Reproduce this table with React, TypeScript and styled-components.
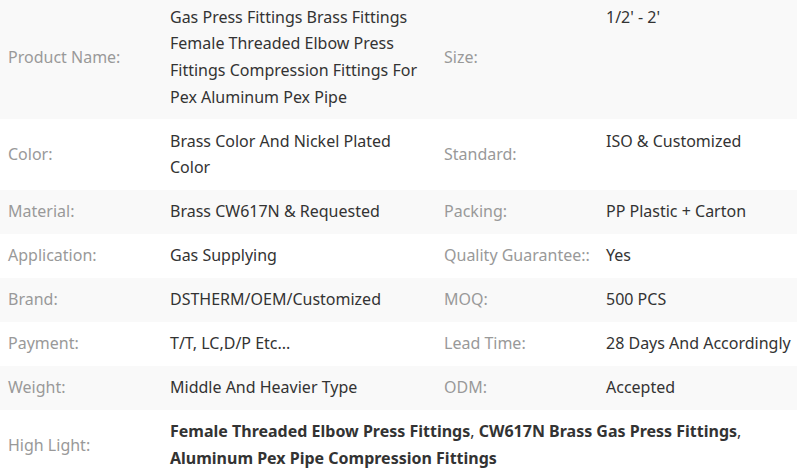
import React from "react";
import styled, { createGlobalStyle } from "styled-components";

const Global = createGlobalStyle`
  html, body { margin: 0; padding: 0; background: #fff; }
  body { font-family: "Noto Sans", "Open Sans", Arial, sans-serif; overflow: hidden; }
`;

const Table = styled.table`
  width: 797px;
  border-collapse: collapse;
  table-layout: fixed;
  margin-top: -5px;
  font-size: 16px;
  line-height: 26.67px;
`;

const Row = styled.tr<{ $shade: boolean }>`
  background: ${(p) => (p.$shade ? "#f9f9f9" : "#ffffff")};
`;

const Label = styled.td`
  color: #999999;
  vertical-align: middle;
  padding: 8.66px 8px;
  white-space: nowrap;
`;

const Value = styled.td<{ $edge?: boolean }>`
  color: #333333;
  vertical-align: top;
  padding: 8.66px ${(p) => (p.$edge ? "0" : "8px")} 8.66px 8px;
`;

const Strong = styled.b`
  font-weight: 700;
  color: #333333;
`;

type Pair = [string, string];
const rows: [Pair, Pair][] = [
  [
    [
      "Product Name:",
      "Gas Press Fittings Brass Fittings Female Threaded Elbow Press Fittings Compression Fittings For Pex Aluminum Pex Pipe",
    ],
    ["Size:", "1/2' - 2'"],
  ],
  [
    ["Color:", "Brass Color And Nickel Plated Color"],
    ["Standard:", "ISO & Customized"],
  ],
  [
    ["Material:", "Brass CW617N & Requested"],
    ["Packing:", "PP Plastic + Carton"],
  ],
  [
    ["Application:", "Gas Supplying"],
    ["Quality Guarantee::", "Yes"],
  ],
  [
    ["Brand:", "DSTHERM/OEM/Customized"],
    ["MOQ:", "500 PCS"],
  ],
  [
    ["Payment:", "T/T, LC,D/P Etc..."],
    ["Lead Time:", "28 Days And Accordingly"],
  ],
  [
    ["Weight:", "Middle And Heavier Type"],
    ["ODM:", "Accepted"],
  ],
];

const highlights = [
  "Female Threaded Elbow Press Fittings",
  "CW617N Brass Gas Press Fittings",
  "Aluminum Pex Pipe Compression Fittings",
];

export default function App() {
  return (
    <>
      <Global />
      <Table>
        <colgroup>
          <col style={{ width: 162 }} />
          <col style={{ width: 274 }} />
          <col style={{ width: 162 }} />
          <col style={{ width: 199 }} />
        </colgroup>
        <tbody>
          {rows.map(([a, b], i) => (
            <Row key={a[0]} $shade={i % 2 === 0}>
              <Label>{a[0]}</Label>
              <Value>{a[1]}</Value>
              <Label>{b[0]}</Label>
              <Value $edge>{b[1]}</Value>
            </Row>
          ))}
          <Row $shade={false}>
            <Label>High Light:</Label>
            <Value colSpan={3}>
              {highlights.map((h, i) => (
                <React.Fragment key={h}>
                  <Strong>{h}</Strong>
                  {i < highlights.length - 1 ? ", " : ""}
                </React.Fragment>
              ))}
            </Value>
          </Row>
        </tbody>
      </Table>
    </>
  );
}
